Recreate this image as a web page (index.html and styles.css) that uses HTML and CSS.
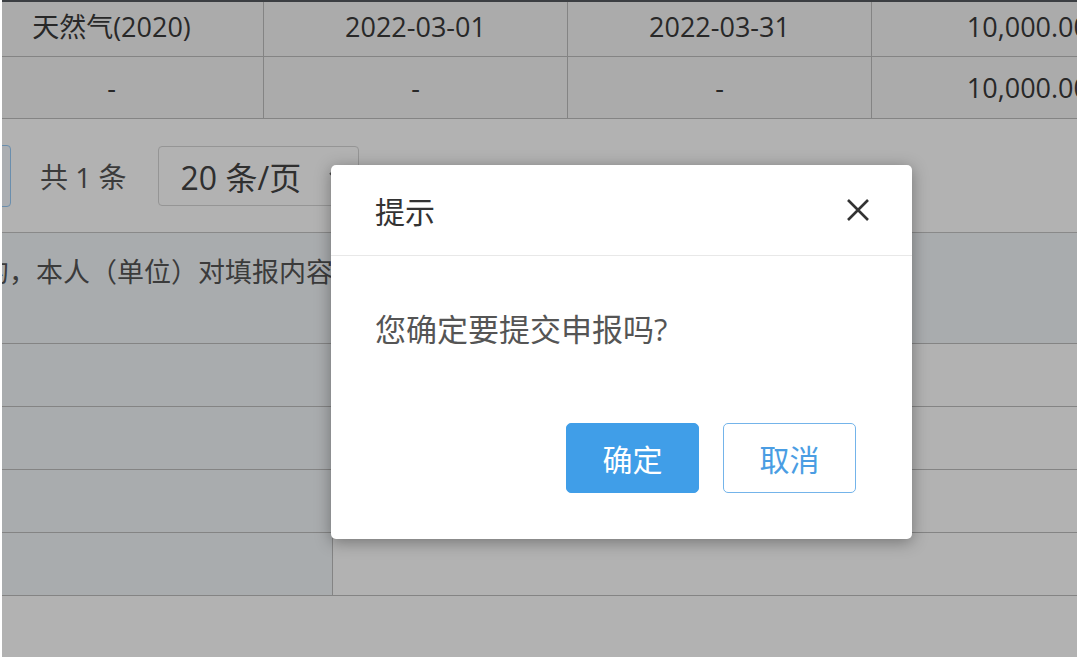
FILE: index.html
```html
<!DOCTYPE html>
<html lang="zh-CN">
  <head>
    <meta charset="UTF-8" />
    <meta name="viewport" content="width=device-width, initial-scale=1.0" />
    <title>申报</title>
    <link rel="stylesheet" href="styles.css">
  </head>
  <body>
    <div class="frame">
      <div class="grid">
        <div class="cell first">天然气(2020)</div>
        <div class="cell first">2022-03-01</div>
        <div class="cell first">2022-03-31</div>
        <div class="cell first num">10,000.00</div>
        <div class="cell">-</div>
        <div class="cell">-</div>
        <div class="cell">-</div>
        <div class="cell num">10,000.00</div>
      </div>

      <div class="pager">
        <button class="page-btn">1</button>
        <span class="total">共 1 条</span>
        <div class="size-select">
          <span>20 条/页</span>
          <svg class="arrow" width="16" height="10" viewBox="0 0 16 10">
            <path d="M2 2 L8 8 L14 2" fill="none" stroke="#666" stroke-width="2" />
          </svg>
        </div>
      </div>

      <div class="statement">
        <span class="statement-text">谨声明：本纳税申报表是根据国家税收法律法规及相关规定填报的，本人（单位）对填报内容（及附带资料）的真实性、可靠性、完整性负责。</span>
      </div>

      <div class="form-row"><div class="label"></div><div class="value"></div></div>
      <div class="form-row"><div class="label"></div><div class="value"></div></div>
      <div class="form-row"><div class="label"></div><div class="value"></div></div>
      <div class="form-row"><div class="label"></div><div class="value"></div></div>

      <div class="mask"></div>

      <div class="msgbox">
        <div class="msgbox-header">
          <span class="msgbox-title">提示</span>
          <svg class="msgbox-close" width="26" height="26" viewBox="0 0 26 26">
            <path d="M3 3 L23 23 M23 3 L3 23" stroke="#333" stroke-width="2.6" />
          </svg>
        </div>
        <div class="msgbox-body">您确定要提交申报吗?</div>
        <div class="msgbox-footer">
          <button class="btn btn-primary">确定</button>
          <button class="btn btn-plain">取消</button>
        </div>
      </div>
    </div>
  </body>
</html>
```

FILE: styles.css
```css
body {
  margin: 0;
  background: #fff;
  font-family: "Open Sans", "Noto Sans CJK SC", sans-serif;
  overflow: hidden;
}

.frame {
  position: relative;
  margin: 0 3px 2px 2px;
  height: 655px;
  border-top: 2px solid #3b3e42;
  background: #fff;
  overflow: hidden;
}

.grid {
  display: grid;
  grid-template-columns: repeat(4, 304px);
  grid-template-rows: 55px 62px;
  width: max-content;
  margin-left: -42px;
}

.cell {
  box-sizing: border-box;
  display: flex;
  align-items: center;
  justify-content: center;
  background: #f5f5f5;
  border-right: 1px solid #bdbdbd;
  border-bottom: 1px solid #bdbdbd;
  font-size: 27px;
  line-height: 1;
  color: #3a3a3a;
}

.cell.first {
  padding-bottom: 5px;
}

.cell.num {
  justify-content: flex-end;
  padding-right: 86px;
}

.pager {
  box-sizing: border-box;
  height: 114px;
  display: flex;
  align-items: center;
  border-bottom: 1px solid #c4c4c4;
}

.page-btn {
  box-sizing: border-box;
  margin-left: -37px;
  width: 46px;
  height: 62px;
  border: 1px solid #99ccf8;
  border-radius: 4px;
  background: #f5faff;
  color: #409eff;
  font-size: 26px;
  font-family: inherit;
}

.total {
  margin-left: 29px;
  font-size: 28px;
  color: #555;
}

.size-select {
  box-sizing: border-box;
  margin-left: 31px;
  width: 201px;
  height: 60px;
  display: flex;
  align-items: center;
  justify-content: space-between;
  padding: 0 14px 0 22px;
  border: 1px solid #d6d6d6;
  border-radius: 4px;
  font-size: 32px;
  color: #444;
}

.statement {
  box-sizing: border-box;
  height: 111px;
  padding-top: 19px;
  background: #f3f7fa;
  border-bottom: 1px solid #bdbdbd;
  white-space: nowrap;
}

.statement-text {
  display: inline-block;
  margin-left: -776px;
  font-size: 27px;
  line-height: 40px;
  color: #555;
}

.form-row {
  box-sizing: border-box;
  height: 63px;
  display: flex;
  border-bottom: 1px solid #bdbdbd;
}

.form-row .label {
  width: 331px;
  box-sizing: border-box;
  background: #f2f7fa;
  border-right: 1px solid #bdbdbd;
}

.form-row .value {
  flex: 1;
}

.mask {
  position: absolute;
  top: 0;
  left: 0;
  right: 0;
  bottom: 0;
  background: rgba(0, 0, 0, 0.3);
}

.msgbox {
  position: absolute;
  left: 329px;
  top: 163px;
  width: 581px;
  background: #fff;
  border-radius: 5px;
  box-shadow: 0 3px 16px rgba(0, 0, 0, 0.35);
}

.msgbox-header {
  box-sizing: border-box;
  height: 91px;
  display: flex;
  align-items: center;
  justify-content: space-between;
  padding: 0 41px 0 44px;
  border-bottom: 1px solid #e8e8e8;
}

.msgbox-title {
  font-size: 30px;
  color: #333;
}

.msgbox-body {
  padding: 51px 44px 0;
  font-size: 31px;
  line-height: 45px;
  color: #555;
}

.msgbox-footer {
  display: flex;
  justify-content: flex-end;
  gap: 24px;
  padding: 71px 56px 46px 0;
}

.btn {
  box-sizing: border-box;
  width: 133px;
  height: 70px;
  border-radius: 5px;
  font-size: 30px;
  font-family: inherit;
  cursor: pointer;
}

.btn-primary {
  background: #409ee8;
  border: 1px solid #409ee8;
  color: #fff;
}

.btn-plain {
  background: #fff;
  border: 1px solid #74b4ea;
  color: #4a9de3;
}
```
